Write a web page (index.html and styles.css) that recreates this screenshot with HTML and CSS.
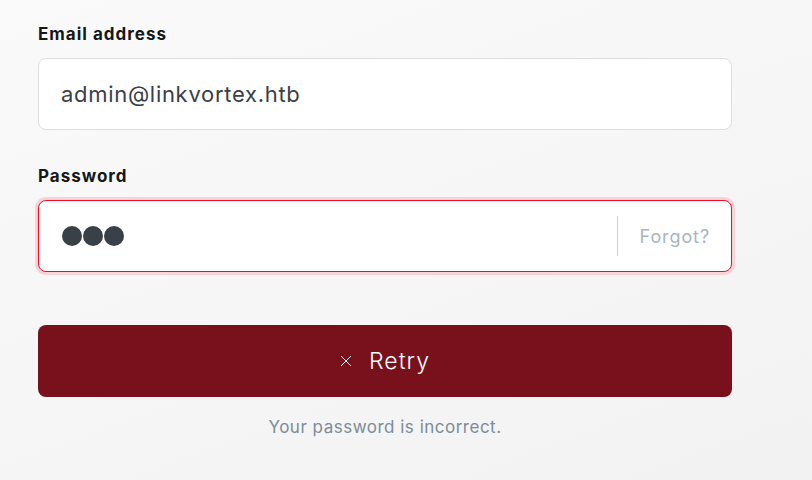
FILE: index.html
```html
<!DOCTYPE html>
<html>
<head>
<meta charset="utf-8">
<link rel="stylesheet" href="styles.css">
</head>
<body>
<form class="signin">
  <div class="field">
    <label class="label">Email address</label>
    <div class="input">
      <span class="value">admin@linkvortex.htb</span>
    </div>
  </div>
  <div class="field">
    <label class="label">Password</label>
    <div class="input input-error">
      <span class="dots"><i></i><i></i><i></i></span>
      <span class="forgot">Forgot?</span>
    </div>
  </div>
  <button type="button" class="btn">
    <svg class="x" width="12" height="12" viewBox="0 0 12 12"><path d="M1 1L11 11M11 1L1 11" stroke="#fff" stroke-width="1" fill="none"/></svg>
    <span>Retry</span>
  </button>
  <p class="error">Your password is incorrect.</p>
</form>
</body>
</html>
```
FILE: styles.css
```css
html, body {
  margin: 0;
  height: 100%;
}
body {
  background: linear-gradient(160deg, #fafafa 0%, #f2f2f2 100%);
  font-family: Inter, "Noto Sans", sans-serif;
  color: #15171a;
}
.signin {
  width: 694px;
  margin-left: 38px;
  padding-top: 23px;
  display: flex;
  flex-direction: column;
}
.field {
  display: flex;
  flex-direction: column;
  margin-bottom: 35px;
}
.label {
  font-size: 17px;
  font-weight: 700;
  line-height: 22px;
  letter-spacing: 1px;
  margin-bottom: 13px;
}
.input {
  box-sizing: border-box;
  height: 72px;
  background: #fff;
  border: 1px solid #dddedf;
  border-radius: 8px;
  display: flex;
  align-items: center;
  padding: 0 22px;
}
.value {
  font-size: 22px;
  color: #394047;
  letter-spacing: 0.7px;
}
.input-error {
  border-color: #f50b23;
  box-shadow: 0 0 0 3px #f9d3d6;
  padding-right: 0;
}
.dots {
  display: flex;
  gap: 1px;
  flex: 1;
  padding-left: 1px;
}
.dots i {
  width: 20px;
  height: 20px;
  border-radius: 50%;
  background: #394047;
}
.forgot {
  height: 40px;
  border-left: 1px solid #ced4d9;
  display: flex;
  align-items: center;
  padding: 0 21px 0 22px;
  font-size: 18px;
  letter-spacing: 0.9px;
  color: #aab4be;
}
.btn {
  margin-top: 18px;
  height: 72px;
  border: none;
  border-radius: 8px;
  background: #78111b;
  color: #fff;
  font-family: Inter, "Noto Sans", sans-serif;
  font-size: 23px;
  font-weight: 300;
  letter-spacing: 1px;
  display: flex;
  align-items: center;
  justify-content: center;
  gap: 17px;
  padding: 0;
}
.x {
  display: block;
}
.error {
  margin: 20px 0 0;
  text-align: center;
  font-size: 17px;
  letter-spacing: 0.5px;
  color: #7c8b9a;
}
```
